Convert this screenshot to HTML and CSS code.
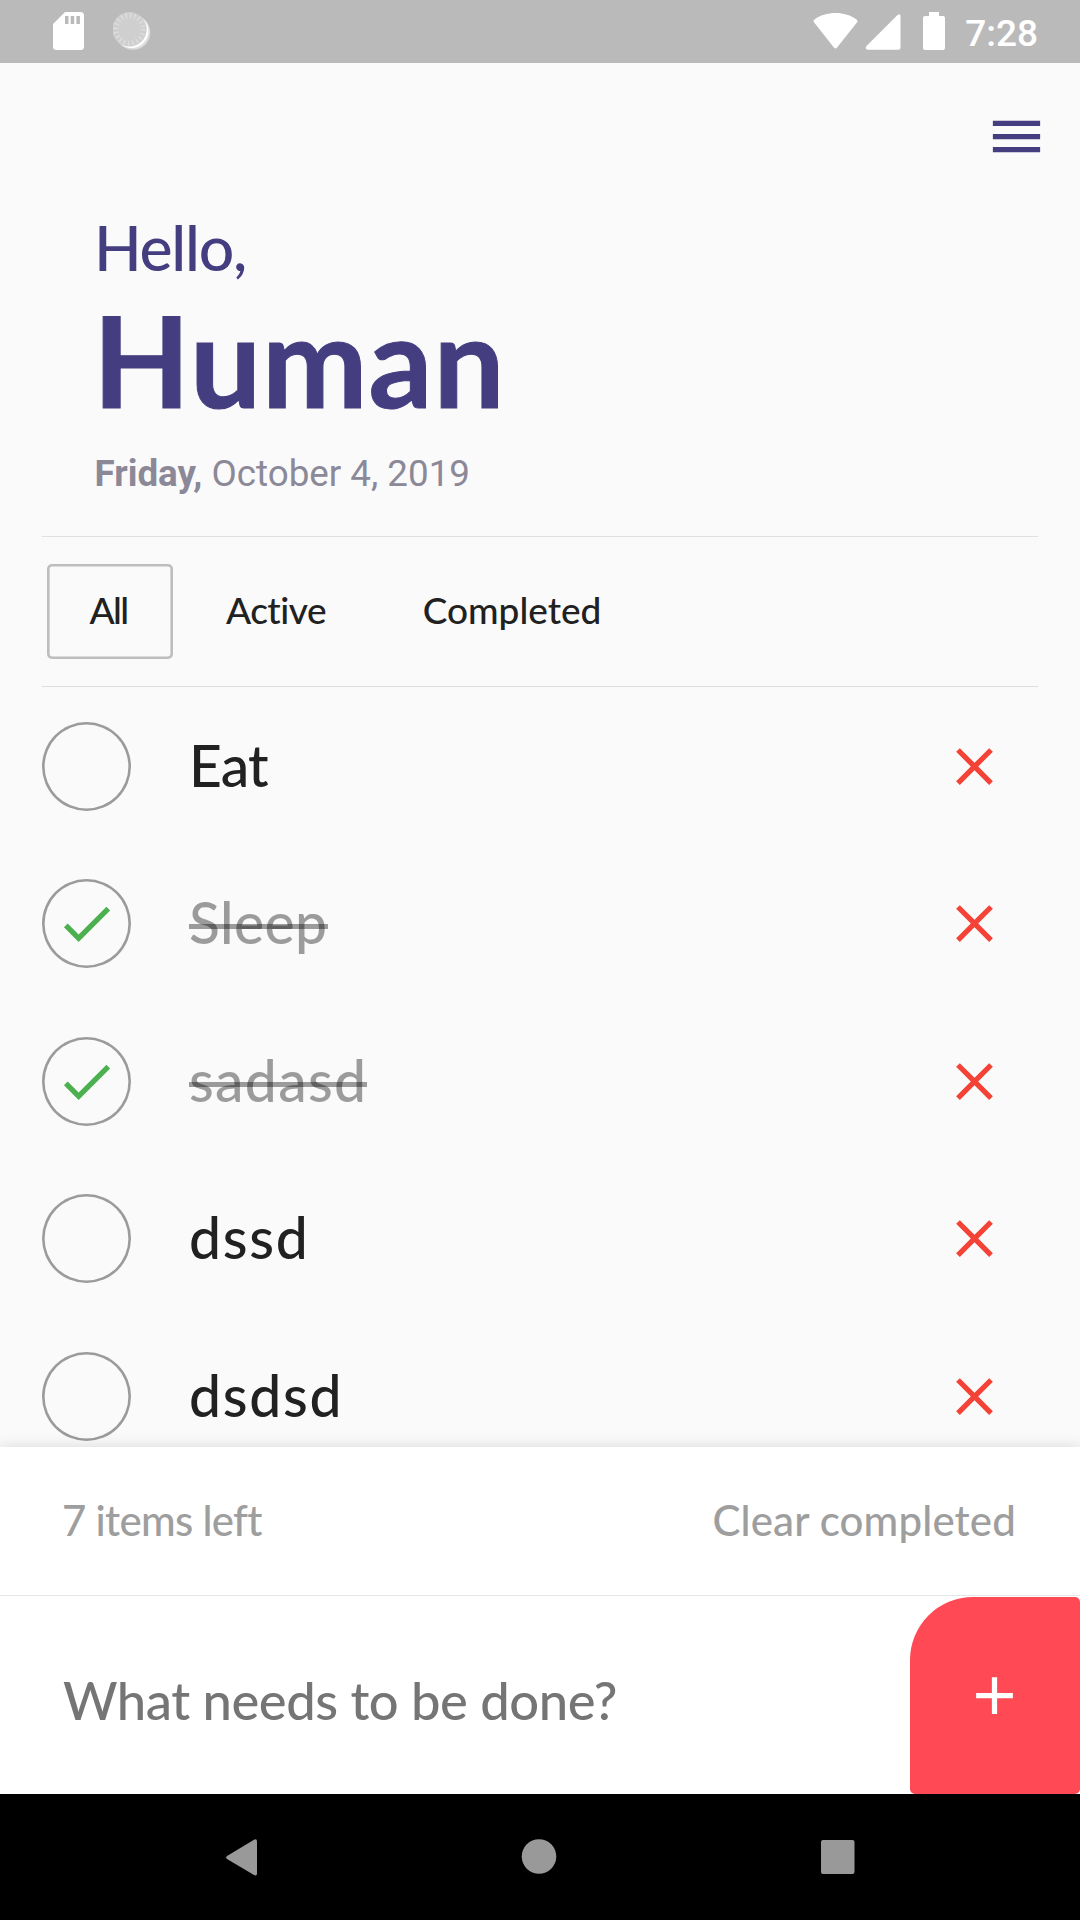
FILE: index.html
```html
<!DOCTYPE html>
<html lang="en">
<head>
<meta charset="utf-8">
<title>Todo</title>
<link rel="stylesheet" href="styles.css">
</head>
<body>
<svg class="defs" aria-hidden="true">
  <symbol id="close" viewBox="0 0 24 24"><path d="M19 6.41L17.59 5 12 10.59 6.41 5 5 6.41 10.59 12 5 17.59 6.41 19 12 13.41 17.59 19 19 17.59 13.41 12z"/></symbol>
  <symbol id="check" viewBox="0 0 24 24"><path d="M9 16.17L4.83 12l-1.42 1.41L9 19 21 7l-1.41-1.41z"/></symbol>
</svg>
<div class="screen">
  <header class="status">
    <div class="status-left">
      <svg width="31" height="38" viewBox="0 0 31 38"><path fill="#fff" fill-rule="evenodd" d="M12 0H27.500Q31 0 31 3.500V34.500Q31 38 27.500 38H3.500Q0 38 0 34.500V12zM12 4v8h3.500V4zM17.700 4v8h3.500V4zM23.400 4v8h3.500V4z"/></svg>
      <svg width="38" height="38" viewBox="0 0 38 38"><circle cx="20" cy="20.500" r="17.300" fill="#dcdcdc"/><circle cx="18.500" cy="19" r="17" fill="#fff"/><circle cx="16.500" cy="17.300" r="17.200" fill="#cfcfcf"/><circle cx="16.500" cy="17.300" r="13.700" fill="none" stroke="#dedede" stroke-width="5" stroke-dasharray="1.300 3.004"/></svg>
    </div>
    <div class="status-right">
      <svg width="89" height="38" viewBox="0 0 89 38"><path fill="#fff" d="M1.200 10.500Q-.3 9 1.500 7.500C12-1.200 33-1.200 43.500 7.500Q45.300 9 43.900 10.500L24.100 35.500Q22.500 37.500 20.900 35.500zM84.500 3Q87.500 .9 87.500 4.500V35.800Q87.500 37.800 85.500 37.800H54.500Q51.500 37 53.500 34z"/></svg>
      <svg class="battery" width="22" height="38" viewBox="0 0 22 38"><path fill="#fff" d="M6 0h10v4h4q2 0 2 2v30q0 2-2 2H2q-2 0-2-2V6q0-2 2-2h4z"/></svg>
      <span class="clock">7:28</span>
    </div>
  </header>

  <nav class="appbar">
    <svg width="63" height="63" viewBox="0 0 24 24"><path fill="#443e80" d="M3 18h18v-2H3v2zm0-5h18v-2H3v2zm0-7v2h18V6H3z"/></svg>
  </nav>

  <section class="greeting">
    <div class="hello">Hello,</div>
    <h1 class="name">Human</h1>
    <p class="date"><b>Friday,</b> October 4, 2019</p>
  </section>

  <div class="filters">
    <button class="filter filter-all">All</button>
    <button class="filter filter-active">Active</button>
    <button class="filter filter-completed">Completed</button>
  </div>

  <ul class="list">
    <li class="item"><span class="circle"></span><span class="label label-eat">Eat</span><svg class="remove"><use href="#close"/></svg></li>
    <li class="item done"><span class="circle"><svg class="tick"><use href="#check"/></svg></span><span class="label label-sleep">Sleep</span><svg class="remove"><use href="#close"/></svg></li>
    <li class="item done"><span class="circle"><svg class="tick"><use href="#check"/></svg></span><span class="label">sadasd</span><svg class="remove"><use href="#close"/></svg></li>
    <li class="item"><span class="circle"></span><span class="label label-loose">dssd</span><svg class="remove"><use href="#close"/></svg></li>
    <li class="item"><span class="circle"></span><span class="label label-loose">dsdsd</span><svg class="remove"><use href="#close"/></svg></li>
  </ul>

  <footer class="panel">
    <div class="summary"><span class="count">7 items left</span><span class="clear">Clear completed</span></div>
    <div class="entry">
      <span class="prompt">What needs to be done?</span>
      <button class="add"><svg width="63" height="63" viewBox="0 0 24 24"><path fill="#fff" d="M19 13h-6v6h-2v-6H5v-2h6V5h2v6h6v2z"/></svg></button>
    </div>
  </footer>

  <div class="navbar">
    <svg width="31" height="37" viewBox="0 0 31 37"><path fill="#999" d="M28 .800Q31-.6 31 2.500V34.500Q31 37.400 28 36L1 20Q-.8 18.500 1 17z"/></svg>
    <svg width="36" height="36" viewBox="0 0 36 36"><circle cx="18" cy="17.500" r="17.300" fill="#999"/></svg>
    <svg width="34" height="34" viewBox="0 0 34 34"><rect width="33.500" height="34" rx="2" fill="#999"/></svg>
  </div>
</div>
</body>
</html>
```
FILE: styles.css
```css
* { box-sizing: border-box; }

body {
  margin: 0;
  background: #fafafa;
  color: #212121;
  font-family: Lato, "Open Sans", sans-serif;
  font-weight: 500;
}

button {
  margin: 0;
  padding: 0;
  border: 0;
  background: none;
  font: inherit;
  color: inherit;
}

svg { display: block; flex: none; }
.defs { display: none; }

.screen {
  width: 1080px;
  height: 1920px;
  display: flex;
  flex-direction: column;
  overflow: hidden;
}

.status {
  height: 63px;
  flex: none;
  display: flex;
  justify-content: space-between;
  padding: 12px 42px 0 53px;
  background: #bababa;
}
.status-left { display: flex; gap: 29px; }
.status-right { display: flex; }
.battery { margin-left: 21px; }
.clock {
  margin-left: 20px;
  font: 500 37px/43px Roboto, sans-serif;
  color: #fff;
}

.appbar {
  height: 146px;
  flex: none;
  display: flex;
  justify-content: flex-end;
  padding: 42px 32px 0 0;
}

.greeting { height: 327px; flex: none; padding-left: 94px; }
.hello {
  font-size: 62.5px;
  line-height: 75px;
  letter-spacing: -1.3px;
  color: #443e80;
}
.name {
  margin: 11px 0 0 -1px;
  font-size: 126px;
  font-weight: 700;
  line-height: 130px;
  letter-spacing: 1px;
  color: #443e80;
  -webkit-text-stroke: 1px #443e80;
}
.date {
  margin: 27px 0 0 0.5px;
  font: 400 36.75px/43px Roboto, sans-serif;
  color: #8b8898;
}

.filters {
  height: 151px;
  flex: none;
  margin: 0 42px;
  padding-left: 5px;
  display: grid;
  grid-template-columns: 126px 188px 264px;
  gap: 10px;
  align-items: center;
  border-top: 1px solid #e0e0e0;
  border-bottom: 1px solid #dcdcdc;
}
.filter {
  height: 95px;
  padding-bottom: 3px;
  font-size: 37px;
  line-height: 44px;
}
.filter-all {
  border-radius: 5px;
  box-shadow: inset 0 0 0 2.6px #bdbdbd;
  letter-spacing: -1.6px;
  padding-right: 3px;
}
.filter-active { letter-spacing: -0.5px; padding-right: 2px; }
.filter-completed { padding-right: 2px; }

.list {
  flex: 1;
  min-height: 0;
  margin: 0;
  padding: 0.4px 74px 0 42px;
  list-style: none;
  overflow: hidden;
}
.item {
  height: 157.5px;
  display: flex;
  align-items: center;
}
.circle {
  width: 89px;
  height: 89px;
  display: grid;
  place-items: center;
  box-shadow: inset 0 0 0 2.6px #9b9b9b;
  border-radius: 50%;
}
.tick { width: 63px; height: 63px; fill: #4caf50; }
.label {
  position: relative;
  margin-left: 58px;
  padding-bottom: 3px;
  font-size: 57px;
  line-height: 68px;
  letter-spacing: 1.3px;
}
.label-eat { letter-spacing: -0.9px; }
.label-sleep { letter-spacing: 0.4px; }
.label-loose { letter-spacing: 1.7px; }
.done .label { color: rgba(0, 0, 0, 0.38); }
.done .label::after {
  content: "";
  position: absolute;
  left: 0;
  right: 0;
  top: 36px;
  height: 5px;
  background: rgba(0, 0, 0, 0.38);
}
.remove {
  width: 63px;
  height: 63px;
  margin-left: auto;
  fill: #f44336;
}

.panel {
  position: relative;
  height: 347px;
  flex: none;
  background: #fff;
  box-shadow: 0 0 14px rgba(0, 0, 0, 0.14);
}
.summary {
  height: 149px;
  display: flex;
  align-items: center;
  justify-content: space-between;
  padding: 0 64px 2px 62px;
  border-bottom: 1px solid #e6e6e6;
  font-size: 42px;
  line-height: 50px;
  color: #9e9e9e;
}
.count { letter-spacing: -0.7px; }
.clear { letter-spacing: 0.15px; }
.entry {
  height: 198px;
  display: flex;
  align-items: center;
  justify-content: space-between;
  padding-left: 63px;
}
.prompt {
  padding-top: 9px;
  font-size: 52.5px;
  line-height: 63px;
  letter-spacing: -0.45px;
  color: #757575;
}
.add {
  width: 170.5px;
  height: 197px;
  align-self: flex-end;
  display: grid;
  place-items: center;
  border-radius: 63px 5px 5px 5px;
  background: #ff4954;
}

.navbar {
  height: 126px;
  flex: none;
  display: flex;
  align-items: center;
  justify-content: space-between;
  padding: 0 225px 0 225.5px;
  background: #000;
}
```
